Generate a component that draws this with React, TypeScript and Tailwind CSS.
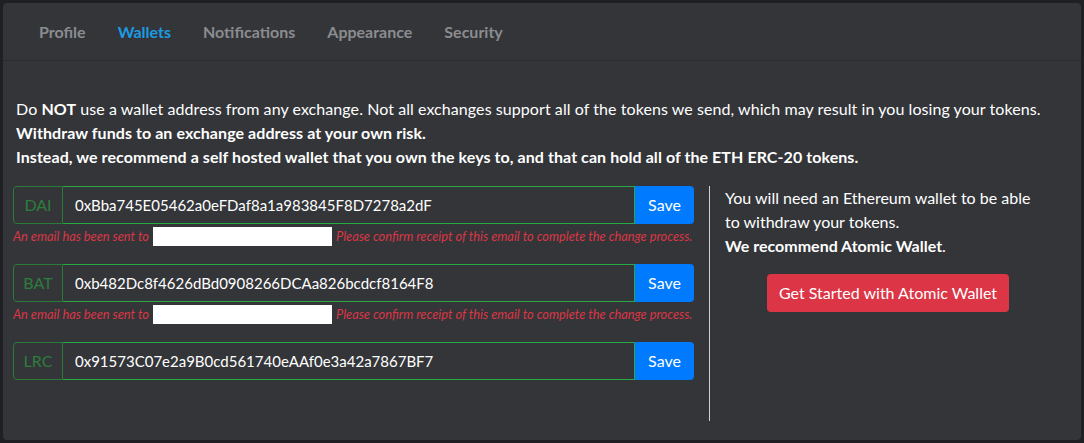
import React from 'react';

type Wallet = { token: string; address: string; pending: boolean };

const wallets: Wallet[] = [
  { token: 'DAI', address: '0xBba745E05462a0eFDaf8a1a983845F8D7278a2dF', pending: true },
  { token: 'BAT', address: '0xb482Dc8f4626dBd0908266DCAa826bcdcf8164F8', pending: true },
  { token: 'LRC', address: '0x91573C07e2a9B0cd561740eAAf0e3a42a7867BF7', pending: false },
];

const tabs = ['Profile', 'Wallets', 'Notifications', 'Appearance', 'Security'];

function WalletRow({ wallet }: { wallet: Wallet }) {
  return (
    <div className="flex flex-col">
      <div className="flex h-[38px] w-[681px]">
        <span className="flex w-[50px] items-center justify-center rounded-l-[4px] border border-[#2a7a38] text-[16px] text-[#2e7d3d]">
          {wallet.token}
        </span>
        <input
          readOnly
          value={wallet.address}
          className="min-w-0 flex-1 border-y border-r border-[#28a745] bg-transparent pl-[12px] text-[15px] text-white outline-none"
        />
        <button className="w-[59px] rounded-r-[4px] bg-[#007bff] text-[16px] text-white">Save</button>
      </div>
      {wallet.pending && (
        <div className="mt-[3px] flex h-[19px] items-center text-[12.8px] italic text-[#dc3545]">
          <span>An email has been sent to</span>
          <span className="mx-[4px] h-[19px] w-[179px] bg-white" />
          <span>Please confirm receipt of this email to complete the change process.</span>
        </div>
      )}
    </div>
  );
}

export default function App() {
  return (
    <div className="h-[443px] w-[1084px] bg-[#1f2023] p-[3px] font-['Lato',sans-serif]">
      <div className="flex h-full flex-col rounded-[4px] bg-[#333539]">
        <nav className="flex h-[58px] items-center gap-[32px] border-b border-[#2a2b2f] pl-[36px] text-[16px] font-bold">
          {tabs.map((tab) => (
            <span key={tab} className={tab === 'Wallets' ? 'text-[#1b9be3]' : 'text-[#8b8c8f]'}>
              {tab}
            </span>
          ))}
        </nav>
        <div className="flex flex-col pl-[10px] pt-[36px]">
          <div className="pl-[3px] text-[16px] leading-[24px] tracking-[0.07px] text-white">
            <p>
              Do <b>NOT</b> use a wallet address from any exchange. Not all exchanges support all of the tokens we send,
              which may result in you losing your tokens.
            </p>
            <p className="font-bold">Withdraw funds to an exchange address at your own risk.</p>
            <p className="font-bold">
              Instead, we recommend a self hosted wallet that you own the keys to, and that can hold all of the ETH
              ERC-20 tokens.
            </p>
          </div>
          <div className="mt-[17px] flex">
            <div className="flex w-[697px] flex-col gap-[18px] border-r border-[#cfd0d2] pb-[41px]">
              {wallets.map((w) => (
                <WalletRow key={w.token} wallet={w} />
              ))}
            </div>
            <div className="flex w-[341px] flex-col pl-[15px] text-[16px] leading-[24px] text-white">
              <p className="max-w-[315px]">You will need an Ethereum wallet to be able to withdraw your tokens.</p>
              <p>
                <b>We recommend Atomic Wallet</b>.
              </p>
              <button className="mx-auto mt-[16px] h-[38px] rounded-[4px] bg-[#dc3545] px-[12px] text-[16px] text-white">
                Get Started with Atomic Wallet
              </button>
            </div>
          </div>
        </div>
      </div>
    </div>
  );
}
